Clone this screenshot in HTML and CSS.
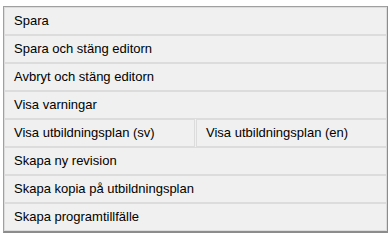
FILE: index.html
```html
<!DOCTYPE html>
<html lang="sv">
<head>
<meta charset="utf-8">
<link rel="stylesheet" href="styles.css">
</head>
<body>
<div class="menu">
  <div class="btn">Spara</div>
  <div class="btn">Spara och stäng editorn</div>
  <div class="btn">Avbryt och stäng editorn</div>
  <div class="btn">Visa varningar</div>
  <div class="split">
    <div class="btn">Visa utbildningsplan (sv)</div>
    <div class="btn">Visa utbildningsplan (en)</div>
  </div>
  <div class="btn">Skapa ny revision</div>
  <div class="btn">Skapa kopia på utbildningsplan</div>
  <div class="btn">Skapa programtillfälle</div>
</div>
</body>
</html>
```
FILE: styles.css
```css
html, body {
  margin: 0;
  padding: 0;
  background: #ffffff;
}
body {
  padding: 6px 0 0 3px;
  font-family: "Liberation Sans", Arial, sans-serif;
  font-size: 13px;
  color: #000;
}
.menu {
  width: 383px;
  border: 1px solid #a0a0a0;
  border-right-color: #8c8c8c;
  border-bottom: 2px solid #8c8c8c;
  background: #f0f0f0;
  display: flex;
  flex-direction: column;
}
.btn {
  height: 26px;
  line-height: 26px;
  border: 1px solid #dcdcdc;
  background: #f0f0f0;
  padding-left: 9px;
  white-space: nowrap;
}
.split {
  display: flex;
  gap: 1px;
}
.split .btn {
  flex: 1;
}
```
